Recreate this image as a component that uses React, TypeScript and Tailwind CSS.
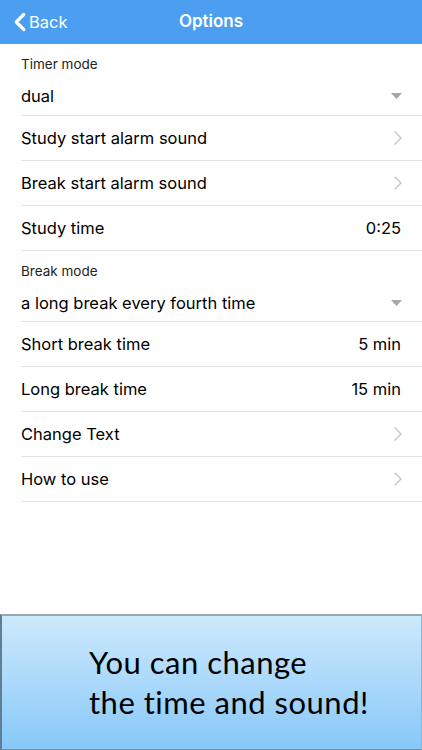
import { ChevronLeft, ChevronRight } from "lucide-react";

const font = { fontFamily: "Inter, 'Liberation Sans', sans-serif" };

function Divider() {
  return <div className="ml-[21px] h-px bg-[#e3e3e3]" />;
}

function SelectGroup({ label, value, tight }: { label: string; value: string; tight?: boolean }) {
  return (
    <>
      <div className={tight ? "px-[21px] pt-[12px] pb-[7px]" : "px-[21px] pt-[12px] pb-[8px]"}>
        <div className="text-[13.5px] leading-[16px] text-[#222]">{label}</div>
        <div className="mt-[13px] flex items-center justify-between">
          <span className="text-[16.5px] leading-[22px] text-black">{value}</span>
          <svg width="11" height="6" viewBox="0 0 11 6" className="mr-[-1px]">
            <path d="M0 0h11L5.5 6z" fill="#a6a6a6" />
          </svg>
        </div>
      </div>
      <Divider />
    </>
  );
}

function Row({ label, value, link }: { label: string; value?: string; link?: boolean }) {
  return (
    <>
      <div className="flex h-[44px] items-center justify-between px-[21px]">
        <span className="text-[16.5px] text-black">{label}</span>
        {value && <span className="text-[16.5px] text-black">{value}</span>}
        {link && <ChevronRight className="mr-[-9px] h-[24px] w-[24px] text-[#c4c4c4]" strokeWidth={1.4} />}
      </div>
      <Divider />
    </>
  );
}

export default function App() {
  return (
    <div className="flex h-[750px] flex-col bg-white" style={font}>
      <div className="relative flex h-[44px] items-center justify-center bg-[#4c9ff0]">
        <div className="absolute left-[5px] top-0 flex h-full items-center text-white">
          <ChevronLeft className="h-[30px] w-[30px]" strokeWidth={2.6} />
          <span className="ml-[-6px] text-[16.5px]">Back</span>
        </div>
        <span className="text-[17px] font-semibold text-white">Options</span>
      </div>

      <SelectGroup label="Timer mode" value="dual" />
      <Row label="Study start alarm sound" link />
      <Row label="Break start alarm sound" link />
      <Row label="Study time" value="0:25" />
      <SelectGroup label="Break mode" value="a long break every fourth time" tight />
      <Row label="Short break time" value="5 min" />
      <Row label="Long break time" value="15 min" />
      <Row label="Change Text" link />
      <Row label="How to use" link />

      <div className="flex-1" />

      <div className="h-[136px] border-t-2 border-l-2 border-r border-b border-t-[#9aa6b0] border-l-[#5d7f98] border-r-[#8fb5d0] border-b-[#6f92ab] bg-gradient-to-b from-[#cde9fc] to-[#87c8f8] pl-[87px] pt-[26px]">
        <p
          className="text-[31px] leading-[40px] tracking-[0.5px] text-black"
          style={{ fontFamily: "Lato, 'DejaVu Sans', sans-serif" }}
        >
          You can change
          <br />
          the time and sound!
        </p>
      </div>
    </div>
  );
}
